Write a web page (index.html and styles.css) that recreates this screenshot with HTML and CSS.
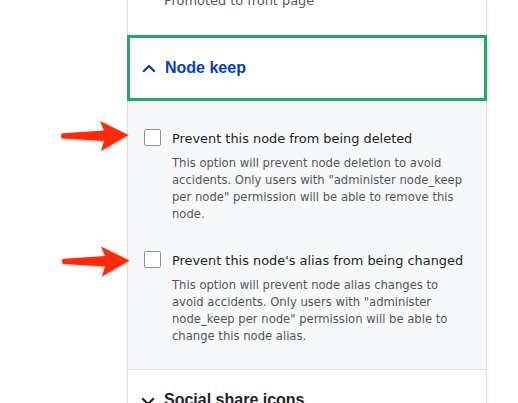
FILE: index.html
```html
<!DOCTYPE html>
<html>
<head>
<meta charset="utf-8">
<link rel="stylesheet" href="styles.css">
</head>
<body>
<div class="page">
  <div class="panel">
    <div class="prev-section">
      <div class="prev-item">Promoted to front page</div>
    </div>
    <div class="summary">
      <svg class="chev" width="14" height="9" viewBox="0 0 14 9"><path d="M1.2 7.8 L7 2 L12.8 7.8" fill="none" stroke="#0b37a6" stroke-width="2.2"/></svg>
      <span class="summary-title">Node keep</span>
    </div>
    <div class="details-body">
      <div class="item">
        <div class="row"><span class="checkbox"></span><span class="label">Prevent this node from being deleted</span></div>
        <div class="desc">This option will prevent node deletion to avoid accidents. Only users with "administer node_keep per node" permission will be able to remove this node.</div>
      </div>
      <div class="item">
        <div class="row"><span class="checkbox"></span><span class="label">Prevent this node's alias from being changed</span></div>
        <div class="desc">This option will prevent node alias changes to avoid accidents. Only users with "administer node_keep per node" permission will be able to change this node alias.</div>
      </div>
    </div>
    <div class="next-section">
      <svg class="chev" width="14" height="9" viewBox="0 0 14 9"><path d="M1.2 1.2 L7 7 L12.8 1.2" fill="none" stroke="#232429" stroke-width="2.2"/></svg>
      <span class="next-title">Social share icons</span>
    </div>
  </div>
  <svg class="arrows" width="518" height="403" viewBox="0 0 518 403">
    <path d="M61,135 Q61,133.5 63,133.3 L104,130.5 L100,121 L128.5,135 L101,151 L104,141 L63,138.6 Q61,138.4 61,136.5 Z" fill="#fd2b0b"/>
    <path d="M61,135 Q61,133.5 63,133.3 L104,130.5 L100,121 L128.5,135 L101,151 L104,141 L63,138.6 Q61,138.4 61,136.5 Z" fill="#fd2b0b" transform="translate(1,125.5)"/>
  </svg>
</div>
</body>
</html>
```
FILE: styles.css
```css
html, body {
  margin: 0;
  padding: 0;
  background: #ffffff;
}
body {
  font-family: "DejaVu Sans", "Liberation Sans", sans-serif;
  color: #232429;
}
.page {
  position: relative;
  width: 518px;
  height: 403px;
  overflow: hidden;
}
.panel {
  margin-left: 127px;
  width: 360px;
  box-sizing: border-box;
  border-left: 1px solid #dcdde2;
  border-right: 1px solid #dcdde2;
  box-shadow: 1px 0 2px rgba(0, 0, 0, 0.04);
}
.prev-section {
  height: 35px;
  overflow: hidden;
  background: #fff;
}
.prev-item {
  margin-top: -8px;
  padding-left: 36px;
  font-size: 12.9px;
  line-height: 18px;
  color: #55565b;
}
.summary {
  margin: 0 -1px;
  height: 66px;
  box-sizing: border-box;
  border: 3px solid #26a769;
  display: flex;
  align-items: center;
  padding-left: 12px;
  background: #fff;
}
.chev {
  display: block;
  flex: none;
}
.summary-title {
  margin-left: 9px;
  font-family: "Liberation Sans", Arial, sans-serif;
  font-size: 16px;
  line-height: 20px;
  font-weight: bold;
  color: #003ecc;
}
.details-body {
  background: #f7f8fa;
  padding: 28px 16px 24px 16px;
  display: flex;
  flex-direction: column;
  gap: 28px;
  border-bottom: 1px solid #dcdde2;
}
.row {
  display: flex;
  align-items: flex-start;
}
.checkbox {
  flex: none;
  width: 17px;
  height: 17px;
  box-sizing: border-box;
  border: 1px solid #8e929c;
  border-radius: 2px;
  background: #fff;
}
.label {
  margin-left: 11px;
  font-size: 12.9px;
  line-height: 19px;
  color: #232429;
}
.desc {
  margin-top: 7px;
  margin-left: 28px;
  width: 299px;
  font-size: 11.6px;
  line-height: 17px;
  color: #55565b;
}
.next-section {
  background: #fff;
  display: flex;
  align-items: center;
  padding: 20px 0 0 13px;
}
.next-section .chev {
  margin-top: 2px;
}
.next-title {
  margin-left: 9px;
  font-family: "Liberation Sans", Arial, sans-serif;
  font-size: 16px;
  line-height: 20px;
  font-weight: bold;
  color: #232429;
}
.arrows {
  position: absolute;
  left: 0;
  top: 0;
  pointer-events: none;
  filter: drop-shadow(0 1px 1px rgba(120, 20, 0, 0.25));
}
```
